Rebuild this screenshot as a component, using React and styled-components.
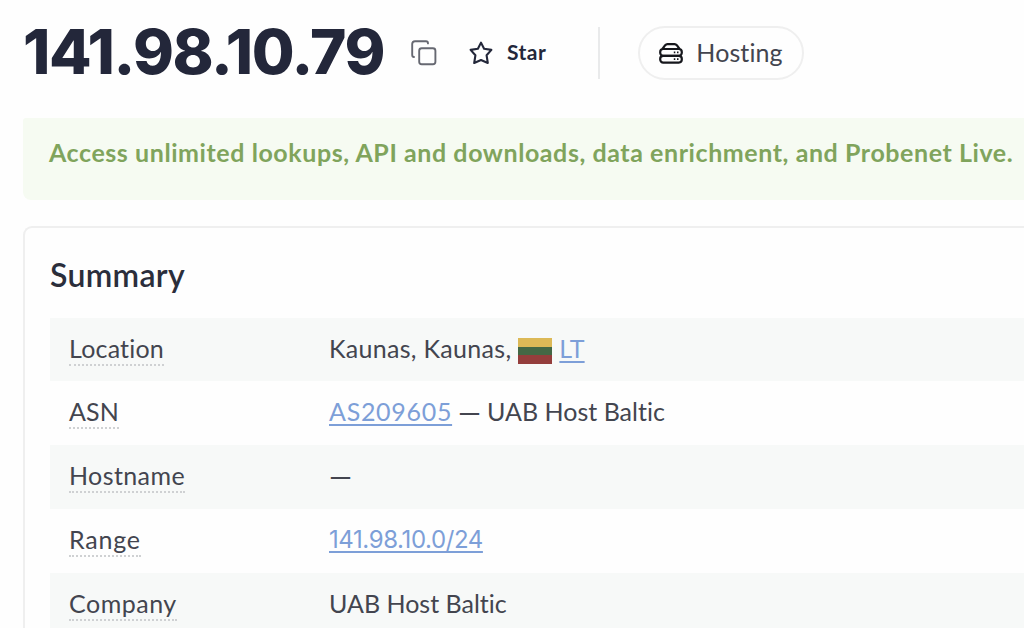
import React from 'react';
import styled, { createGlobalStyle } from 'styled-components';

const GlobalStyle = createGlobalStyle`
    * {
      box-sizing: border-box;
    }
    body {
      margin: 0;
      overflow: hidden;
      background: #fefefe;
      color: #43454f;
      font-family: Lato, 'Liberation Sans', sans-serif;
      font-size: 25px;
      font-variant-ligatures: none;
    }
`;

const Page = styled.main`
    width: 1024px;
    height: 628px;
    overflow: hidden;
    padding-left: 23px;
`;

const Header = styled.header`
    display: flex;
    align-items: center;
    height: 105px;
    margin-bottom: 13px;
`;

const Address = styled.h1`
    flex: none;
    width: 388px;
    margin: 0;
    color: #23273a;
    font-family: Inter, 'Liberation Sans', sans-serif;
    font-size: 62px;
    line-height: 80px;
    font-weight: 800;
    letter-spacing: -1.4px;
    white-space: nowrap;
    padding-bottom: 2px;
`;

const IconButton = styled.button`
    display: flex;
    align-items: center;
    padding: 0;
    border: 0;
    background: none;
    color: ${({ $color }) => $color || '#23273a'};
    font-family: inherit;
    font-size: 21px;
    font-weight: 700;
    letter-spacing: 0.5px;
    gap: 14px;
    margin-right: ${({ $after }) => $after}px;
`;

const ButtonText = styled.span`
    padding-bottom: 2px;
`;

const Divider = styled.div`
    width: 2px;
    height: 52px;
    background: #e9eaeb;
    margin-right: 38px;
`;

const Tag = styled.div`
    display: flex;
    align-items: center;
    gap: 13px;
    width: 166px;
    height: 54px;
    padding-left: 19px;
    border: 2px solid #efefef;
    border-radius: 27px;
    letter-spacing: 0.1px;
`;

const Banner = styled.div`
    height: 82px;
    padding: 16px 0 0 26px;
    border-radius: 3px 0 0 8px;
    background: #f6fbf2;
    color: #80a45c;
    font-weight: 700;
    line-height: 36px;
    letter-spacing: 0.57px;
    white-space: nowrap;
`;

const Card = styled.section`
    height: 500px;
    margin-top: 26px;
    padding: 26px 0 0 25px;
    border: 2px solid #efefef;
    border-right: 0;
    border-radius: 9px 0 0 0;
`;

const CardTitle = styled.h2`
    margin: 0 0 22.6px;
    color: #2b2e3b;
    font-size: 32px;
    font-weight: 600;
    line-height: 41px;
    letter-spacing: 0.3px;
`;

const Row = styled.div`
    display: grid;
    grid-template-columns: 260px 1fr;
    align-items: start;
    height: 63.8px;
    padding: 13px 0 0 19px;
    background: ${({ $shaded }) => ($shaded ? '#f7f9f8' : 'transparent')};
`;

const Label = styled.span`
    justify-self: start;
    height: 35px;
    line-height: 35px;
    border-bottom: 2px dotted #cfd1d3;
    letter-spacing: ${({ $spacing }) => $spacing || 0}px;
`;

const Value = styled.div`
    display: flex;
    align-items: center;
    height: 35px;
    line-height: 35px;
    white-space: pre;
    letter-spacing: ${({ $spacing }) => $spacing || 0}px;
`;

const Link = styled.a`
    color: #7d9fd8;
    text-decoration: underline;
    text-decoration-thickness: 2px;
    text-underline-offset: 3px;
    letter-spacing: ${({ $spacing }) => $spacing || 0}px;
`;

const RangeLink = styled(Link)`
    font-family: Inter, 'Liberation Sans', sans-serif;
    font-size: 24px;
    letter-spacing: -0.4px;
`;

const Dash = styled.span`
    font-size: 29px;
    margin: 0 ${({ $gap }) => $gap || 0}px;
`;

const Flag = styled.span`
    width: 34px;
    height: 26px;
    margin: 5px 7px 0 7px;
    background: linear-gradient(#dcb957 0 9px, #436845 9px 17px, #943e3c 17px);
`;

const CopyIcon = () => (
  <svg width="26" height="26" viewBox="0 0 26 26" fill="none" stroke="currentColor" strokeWidth="1.9">
    <path d="M3 17 Q1.2 17 1.2 15 V4 Q1.2 1.2 4 1.2 H15 Q17 1.2 17 3.4" strokeLinecap="round" />
    <rect x="8.2" y="8.2" width="16.2" height="16" rx="2.5" />
  </svg>
);

const StarIcon = () => (
  <svg width="24" height="24" viewBox="0 0 24 24" fill="none" stroke="currentColor" strokeWidth="2.1" strokeLinejoin="round">
    <path d="M12 1.6 L15.1 7.8 L22.4 8.9 L17.6 14.3 L18.8 22 L12 19 L5.2 22 L6.4 14.3 L1.6 8.9 L8.9 7.8 Z" />
  </svg>
);

const ServerIcon = () => (
  <svg width="24" height="22" viewBox="0 0 24 22" fill="none" stroke="#16171c" strokeWidth="2.2" strokeLinejoin="round">
    <path d="M3.4 7 L6.2 3.2 Q7.1 2.1 8.4 2.1 H15.6 Q16.9 2.1 17.8 3.2 L20.6 7" />
    <rect x="1.2" y="7" width="21.6" height="6.8" rx="3" />
    <rect x="1.2" y="13.8" width="21.6" height="6.8" rx="3" />
    <path d="M14.8 10.4 h1.5 M18 10.4 h1.5 M14.8 17.2 h1.5 M18 17.2 h1.5" strokeWidth="1.8" />
  </svg>
);

const rows = [
  {
    label: 'Location',
    labelSpacing: 0.2,
    spacing: 0.3,
    value: <>Kaunas, Kaunas,<Flag /><Link>LT</Link></>,
  },
  {
    label: 'ASN',
    labelSpacing: 0.1,
    spacing: 0,
    value: <><Link $spacing={0.7}>AS209605</Link><Dash $gap={6}>—</Dash>UAB Host Baltic</>,
  },
  { label: 'Hostname', labelSpacing: 0.4, value: <Dash>—</Dash> },
  { label: 'Range', labelSpacing: 0.8, value: <RangeLink>141.98.10.0/24</RangeLink> },
  { label: 'Company', labelSpacing: 0.5, spacing: 0, value: 'UAB Host Baltic' },
];

const App = () => (
  <>
    <GlobalStyle />
    <Page>
      <Header>
        <Address>141.98.10.79</Address>
        <IconButton $color="#666871" $after={32}><CopyIcon /></IconButton>
        <IconButton $after={52}><StarIcon /><ButtonText>Star</ButtonText></IconButton>
        <Divider />
        <Tag><ServerIcon /><ButtonText>Hosting</ButtonText></Tag>
      </Header>
      <Banner>Access unlimited lookups, API and downloads, data enrichment, and Probenet Live.</Banner>
      <Card>
        <CardTitle>Summary</CardTitle>
        {rows.map((row, i) => (
          <Row key={row.label} $shaded={i % 2 === 0}>
            <Label $spacing={row.labelSpacing}>{row.label}</Label>
            <Value $spacing={row.spacing}>{row.value}</Value>
          </Row>
        ))}
      </Card>
    </Page>
  </>
);

export default App;
